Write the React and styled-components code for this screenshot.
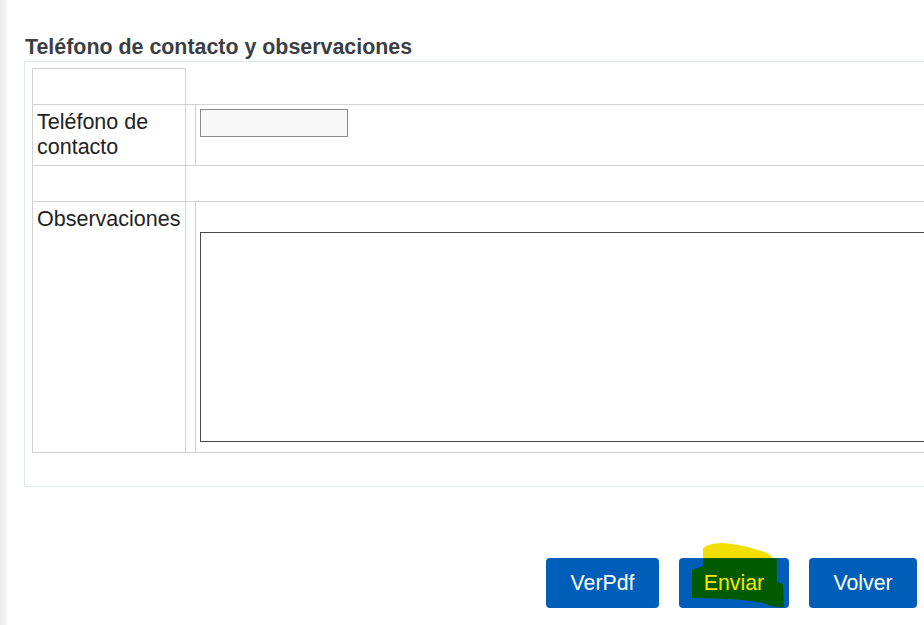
import React from "react";
import styled, { createGlobalStyle } from "styled-components";

const Global = createGlobalStyle`
  html, body {
    margin: 0;
    padding: 0;
    background: #ffffff;
    overflow: hidden;
  }
  body {
    font-family: "Liberation Sans", Arial, sans-serif;
  }
  * { box-sizing: border-box; }
`;

const Page = styled.div`
  display: flex;
  width: 924px;
  min-height: 625px;
`;

const Strip = styled.div`
  flex: 0 0 8px;
  background: linear-gradient(to right, #ececec 0%, #f2f2f2 60%, #fbfbfb 100%);
`;

const Main = styled.div`
  flex: 1;
  min-width: 0;
  padding: 35px 0 0 16px;
`;

const Heading = styled.h2`
  margin: 0 0 2px 1px;
  font-size: 21.4px;
  line-height: 24px;
  font-weight: 700;
  color: #3b3f44;
  white-space: nowrap;
`;

const Panel = styled.div`
  width: 1000px;
  border: 1px solid #e0e7ee;
  padding: 6px 0 33px 7px;
`;

const Table = styled.div`
  border-bottom: 1px solid #d2d2d2;
`;

const Row = styled.div`
  display: grid;
  grid-template-columns: 154px 1fr;
  border-top: ${(p) => (p.$first ? "none" : "1px solid #d2d2d2")};
`;

const LabelCell = styled.div`
  border-left: 1px solid #d2d2d2;
  border-right: 1px solid #d2d2d2;
  border-top: ${(p) => (p.$first ? "1px solid #d2d2d2" : "none")};
  padding: 5px 4px;
  font-size: 21.5px;
  line-height: 25px;
  color: #222222;
  white-space: nowrap;
`;

const ValueCell = styled.div`
  margin-left: 9px;
  border-left: ${(p) => (p.$lined ? "1px solid #d2d2d2" : "none")};
  padding: ${(p) => p.$pad || "4px 0 0 4px"};
`;

const TextInput = styled.input`
  display: block;
  width: 148px;
  height: 28px;
  margin: 0;
  border: 1px solid #8a8a8a;
  background: #f8f8f8;
  padding: 2px 4px;
  font: 16px "Liberation Sans", Arial, sans-serif;
  outline: none;
`;

const TextArea = styled.textarea`
  display: block;
  width: 790px;
  height: 210px;
  margin: 0;
  border: 1px solid #45494d;
  background: #ffffff;
  resize: none;
  padding: 4px;
  font: 16px "Liberation Sans", Arial, sans-serif;
  outline: none;
`;

const ButtonRow = styled.div`
  display: flex;
  justify-content: flex-end;
  gap: 20px;
  margin-top: 71px;
  padding-right: 7px;
`;

const Button = styled.button`
  position: relative;
  width: ${(p) => p.$w}px;
  height: 50px;
  border: none;
  border-radius: 4px;
  background: #005eb8;
  color: ${(p) => (p.$marked ? "#f4e800" : "#ffffff")};
  font-family: "Liberation Sans", Arial, sans-serif;
  font-size: 21.3px;
  padding: 0;
  cursor: pointer;
`;

const ButtonText = styled.span`
  position: relative;
  z-index: 1;
`;

const Scribble = styled.svg`
  position: absolute;
  left: 0;
  top: -16px;
  width: 110px;
  height: 70px;
  overflow: visible;
  pointer-events: none;
`;

function Highlight() {
  return (
    <Scribble viewBox="0 -16 110 70">
      <path
        d="M24,2 L24,-10 Q30,-15 45,-15 Q70,-12 88,-5 Q93,-2 95,2 Z"
        fill="#f2df00"
      />
      <path
        d="M24,0 L98,0 L98,24 L104,26 L105,49 Q95,50 84,45 Q70,42 50,41 Q30,40 13,40 L13,12 L24,8 Z"
        fill="#005a00"
      />
    </Scribble>
  );
}

export default function App() {
  return (
    <>
      <Global />
      <Page>
        <Strip />
        <Main>
          <Heading>Teléfono de contacto y observaciones</Heading>
          <Panel>
            <Table>
              <Row $first>
                <LabelCell $first>&nbsp;</LabelCell>
                <ValueCell />
              </Row>
              <Row>
                <LabelCell>
                  Teléfono de
                  <br />
                  contacto
                </LabelCell>
                <ValueCell $lined>
                  <TextInput type="text" />
                </ValueCell>
              </Row>
              <Row>
                <LabelCell>&nbsp;</LabelCell>
                <ValueCell />
              </Row>
              <Row>
                <LabelCell>Observaciones</LabelCell>
                <ValueCell $lined $pad="30px 0 10px 4px">
                  <TextArea />
                </ValueCell>
              </Row>
            </Table>
          </Panel>
          <ButtonRow>
            <Button $w={113}>
              <ButtonText>VerPdf</ButtonText>
            </Button>
            <Button $w={110} $marked>
              <Highlight />
              <ButtonText>Enviar</ButtonText>
            </Button>
            <Button $w={108}>
              <ButtonText>Volver</ButtonText>
            </Button>
          </ButtonRow>
        </Main>
      </Page>
    </>
  );
}
